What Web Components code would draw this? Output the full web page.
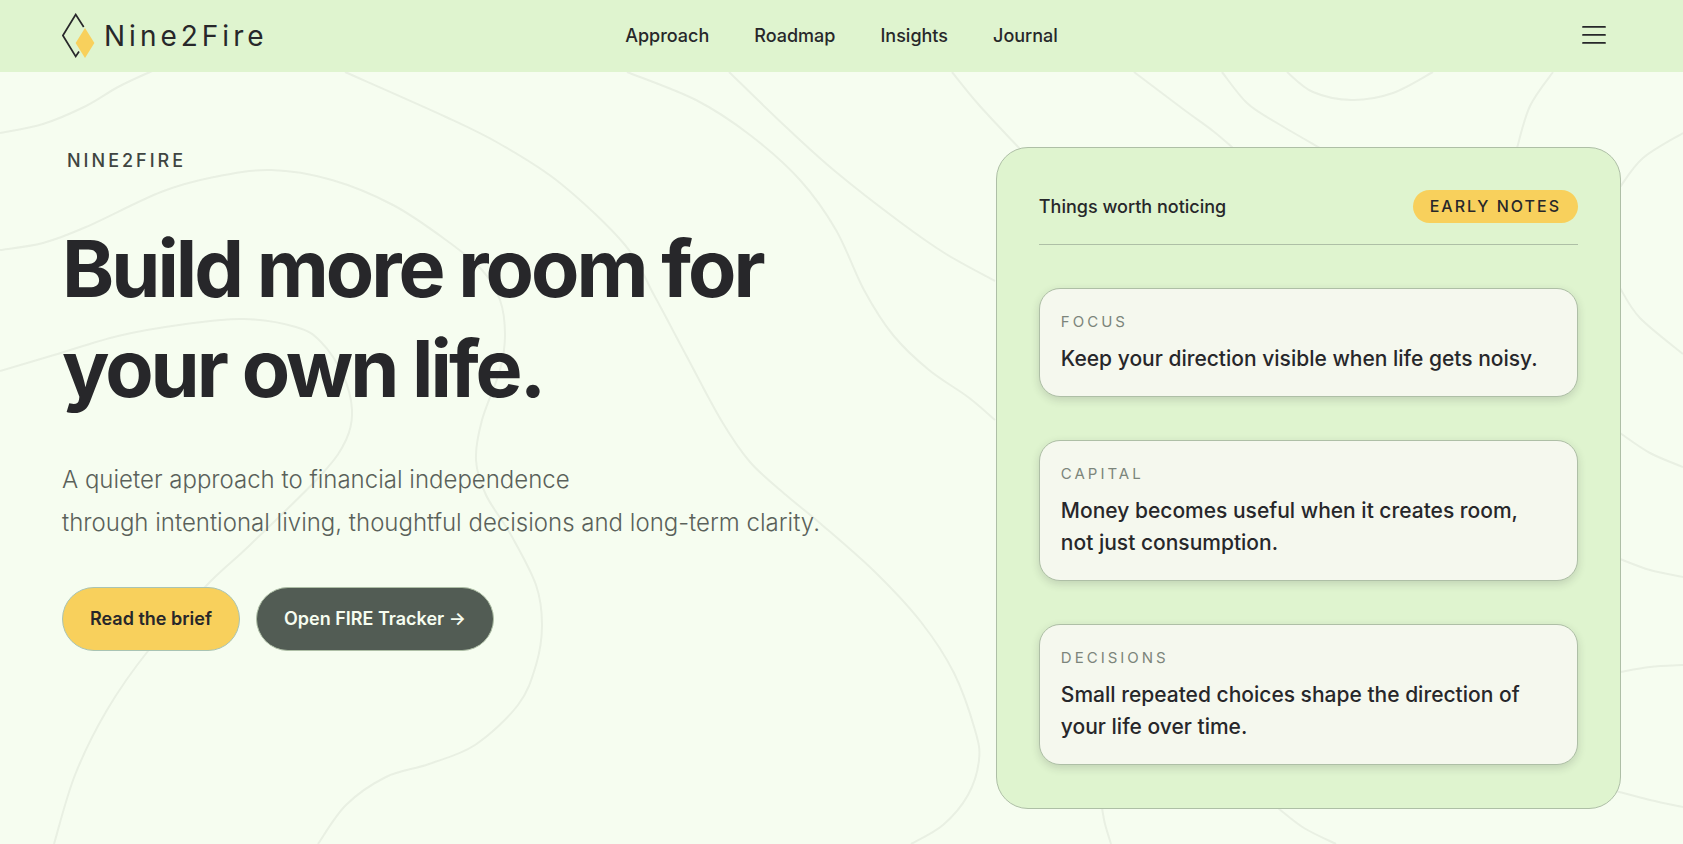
<!DOCTYPE html>
<html lang="en">
<head>
<meta charset="utf-8">
<meta name="viewport" content="width=device-width, initial-scale=1">
<title>Nine2Fire</title>
<style>
  :root {
    --ink: #27272a;
    --muted: #676e67;
    --leaf: #dff4cf;
    --paper: #f6fdf0;
    --card: #f5f8ee;
    --sun: #f8d05c;
    --moss: #525c54;
    --line: #aebfa6;
  }
  body { margin: 0; background: var(--paper); color: var(--ink); font-family: Inter, "Open Sans", sans-serif; }
</style>
</head>
<body>
<n2f-page>
  <n2f-header slot="header"></n2f-header>
  <n2f-hero>
    <n2f-intro></n2f-intro>
    <n2f-panel heading="Things worth noticing" badge="EARLY NOTES">
      <n2f-note label="FOCUS">Keep your direction visible when life gets noisy.</n2f-note>
      <n2f-note label="CAPITAL">Money becomes useful when it creates room,<br>not just consumption.</n2f-note>
      <n2f-note label="DECISIONS">Small repeated choices shape the direction of your life over time.</n2f-note>
    </n2f-panel>
  </n2f-hero>
</n2f-page>

<script>
const define = (name, render) => customElements.define(name, class extends HTMLElement {
  connectedCallback() {
    if (this.shadowRoot) return;
    this.attachShadow({ mode: "open" }).innerHTML = render(this);
  }
});

define("n2f-page", () => `
  <style>
    :host { display: flex; flex-direction: column; position: relative; min-height: 100vh; overflow: hidden; }
    main { position: relative; flex: 1; }
  </style>
  <n2f-contours></n2f-contours>
  <slot name="header"></slot>
  <main><slot></slot></main>`);

/* Topographic lines behind the page: each entry is the list of points of one contour. */
const contours = [
  [0,133, 43,124, 86,106, 118,87, 150,72, 180,60],
  [0,250, 43,243, 86,227, 161,192, 214,177, 271,170, 332,180, 393,205, 446,240, 482,270, 500,300, 505,335, 500,370, 482,420, 476,460, 486,495, 511,535, 536,585, 542,625, 536,665, 518,705, 475,745, 429,764, 386,777, 346,805, 318,844],
  [0,371, 54,355, 118,336, 179,325, 243,319, 296,327, 321,342, 343,375, 352,410, 346,440, 321,475, 250,545, 206,586, 148,651, 107,710, 75,775, 54,844],
  [345,72, 446,117, 500,144, 560,183, 625,245, 654,295, 686,355, 721,420, 750,462, 786,495, 821,524, 875,572, 921,622, 954,673, 975,730, 979,760, 968,795, 943,825, 911,844],
  [627,72, 696,100, 750,135, 800,180, 836,230, 864,290, 893,335, 929,370, 968,397, 995,420],
  [729,72, 786,127, 836,172, 900,222, 946,254, 995,281],
  [952,72, 979,105, 1020,149],
  [1134,72, 1183,109, 1213,131, 1233,148],
  [1222,72, 1247,103, 1277,123, 1320,148],
  [1287,72, 1313,92, 1352,100, 1393,93, 1433,72],
  [1553,72, 1530,106, 1517,148],
  [1620,187, 1643,158, 1683,133],
  [1620,288, 1640,318, 1683,354],
  [1620,433, 1650,453, 1683,467],
  [1620,559, 1650,570, 1683,577],
  [1620,672, 1650,667, 1683,665],
  [1616,791, 1650,800, 1683,807],
  [1102,808, 1105,824, 1111,844],
  [1278,808, 1304,828, 1336,844]
];
const smooth = list => {
  const p = [];
  for (let i = 0; i < list.length; i += 2) p.push([list[i], list[i + 1]]);
  let d = `M${p[0]}`;
  for (let i = 0; i < p.length - 1; i++) {
    const a = p[i - 1] || p[i], b = p[i], c = p[i + 1], e = p[i + 2] || c;
    const h1 = [b[0] + (c[0] - a[0]) / 6, b[1] + (c[1] - a[1]) / 6];
    const h2 = [c[0] - (e[0] - b[0]) / 6, c[1] - (e[1] - b[1]) / 6];
    d += `C${h1} ${h2} ${c}`;
  }
  return d;
};
define("n2f-contours", () => `
  <style>
    :host { position: absolute; inset: 0; pointer-events: none; }
    svg { display: block; width: 100%; height: 100%; }
    path { fill: none; stroke: var(--ink); stroke-opacity: .06; stroke-width: 2; }
  </style>
  <svg viewBox="0 0 1683 844" preserveAspectRatio="xMidYMid slice" aria-hidden="true">
    ${contours.map(c => `<path d="${smooth(c)}"/>`).join("")}
  </svg>`);

define("n2f-header", () => `
  <style>
    :host { display: block; position: relative; background: var(--leaf); }
    header { display: grid; grid-template-columns: 1fr auto 1fr; align-items: center; height: 72px; padding: 0 62px; }
    .brand { display: flex; align-items: center; gap: 9px; color: inherit; text-decoration: none; font-size: 28px; line-height: 36px; letter-spacing: 4px; }
    .brand svg { display: block; }
    nav { display: flex; gap: 45px; }
    nav a { color: inherit; text-decoration: none; font-size: 18px; line-height: 24px; font-weight: 500; }
    button { justify-self: end; padding: 12px 15px; border: 0; background: none; color: inherit; cursor: pointer; }
    button svg { display: block; }
  </style>
  <header>
    <a class="brand" href="#">
      <svg width="33" height="46" viewBox="0 0 33 46" aria-hidden="true">
        <path d="M21.7 14 13.7 1.5 .9 22.5 13.7 43.5 17 38.5" fill="none" stroke="#27272a" stroke-width="1.7"/>
        <path d="M23 15 32.4 30 23 45 13.6 30Z" fill="#f8d05c"/>
      </svg>
      <span>Nine2Fire</span>
    </a>
    <nav aria-label="Main">
      <a href="#approach">Approach</a>
      <a href="#roadmap">Roadmap</a>
      <a href="#insights">Insights</a>
      <a href="#journal">Journal</a>
    </nav>
    <button type="button" aria-label="Open menu">
      <svg width="24" height="20" viewBox="0 0 24 20" aria-hidden="true">
        <path d="M1 .9H23M1 8.9H23M1 16.9H23" stroke="#27272a" stroke-width="1.8" stroke-linecap="round"/>
      </svg>
    </button>
  </header>`);

define("n2f-hero", () => `
  <style>
    :host { display: grid; grid-template-columns: minmax(0, 57fr) minmax(0, 40fr); align-items: start; gap: 43px; padding: 75px 62px 35px; }
  </style>
  <slot></slot>`);

define("n2f-intro", () => `
  <style>
    :host { display: block; }
    .eyebrow { margin: 0 0 44px; padding-left: 5px; font-size: 18px; line-height: 27px; font-weight: 500; letter-spacing: 3px; color: #3f4541; }
    h1 { margin: 0 0 40px; font-size: 79px; line-height: 100px; font-weight: 700; letter-spacing: -3px; }
    .lead { margin: 0 0 43px; font-size: 24px; line-height: 43px; font-weight: 300; color: #5a615a; }
    .actions { display: flex; flex-wrap: wrap; gap: 16px; }
  </style>
  <p class="eyebrow">NINE2FIRE</p>
  <h1>Build more room for<br>your own life.</h1>
  <p class="lead">A quieter approach to financial independence<br>through intentional living, thoughtful decisions and long-term clarity.</p>
  <div class="actions">
    <n2f-action tone="sun" href="#brief">Read the brief</n2f-action>
    <n2f-action tone="moss" href="#tracker">Open FIRE Tracker →</n2f-action>
  </div>`);

define("n2f-action", el => `
  <style>
    :host { display: block; }
    a { display: block; padding: 19px 27px; border: 1px solid #a9c4b4; border-radius: 32px; background: var(--sun); color: var(--ink); font-size: 18px; line-height: 24px; font-weight: 600; text-decoration: none; }
    :host([tone="moss"]) a { background: var(--moss); color: var(--paper); border-color: var(--line); }
  </style>
  <a href="${el.getAttribute("href")}"><slot></slot></a>`);

define("n2f-panel", el => `
  <style>
    :host { display: flex; flex-direction: column; gap: 43px; padding: 42px 42px 43px; border: 1px solid var(--line); border-radius: 32px; background: var(--leaf); }
    .head { display: flex; align-items: center; justify-content: space-between; padding-bottom: 21px; border-bottom: 1px solid var(--line); }
    h2 { margin: 0; font-size: 18px; line-height: 24px; font-weight: 500; }
    .badge { padding: 4px 17px; border-radius: 17px; background: var(--sun); font-size: 16px; line-height: 25px; font-weight: 500; letter-spacing: 2px; }
  </style>
  <div class="head"><h2>${el.getAttribute("heading")}</h2><span class="badge">${el.getAttribute("badge")}</span></div>
  <slot></slot>`);

define("n2f-note", el => `
  <style>
    :host { display: block; padding: 21px; border: 1px solid var(--line); border-radius: 21px; background: var(--card); box-shadow: 0 3px 8px rgba(39, 39, 42, .16); }
    h3 { margin: 0 0 10px; font-size: 15px; line-height: 23px; font-weight: 400; letter-spacing: 3px; color: #7c857b; }
    p { margin: 0; font-size: 21px; line-height: 32px; font-weight: 500; }
  </style>
  <h3>${el.getAttribute("label")}</h3>
  <p><slot></slot></p>`);
</script>
</body>
</html>
